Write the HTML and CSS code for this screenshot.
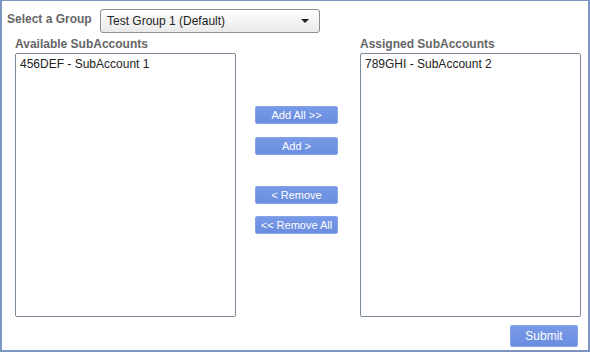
FILE: index.html
```html
<!DOCTYPE html>
<html>
<head>
<meta charset="utf-8">
<link rel="stylesheet" href="styles.css">
</head>
<body>
<div class="frame">
  <div class="top">
    <span class="label">Select a Group</span>
    <div class="select"><span>Test Group 1 (Default)</span><span class="arrow"></span></div>
  </div>
  <div class="cols">
    <div class="col">
      <div class="heading">Available SubAccounts</div>
      <div class="list"><div class="item">456DEF - SubAccount 1</div></div>
    </div>
    <div class="mid">
      <button class="btn">Add All &gt;&gt;</button>
      <button class="btn">Add &gt;</button>
      <button class="btn gap">&lt; Remove</button>
      <button class="btn">&lt;&lt; Remove All</button>
    </div>
    <div class="col">
      <div class="heading">Assigned SubAccounts</div>
      <div class="list"><div class="item">789GHI - SubAccount 2</div></div>
    </div>
  </div>
  <div class="foot"><button class="btn submit">Submit</button></div>
</div>
</body>
</html>
```
FILE: styles.css
```css
* { box-sizing: border-box; }
body { margin: 0; font-family: "Liberation Sans", Arial, sans-serif; font-size: 12px; color: #333; }
.frame {
  width: 590px; height: 352px;
  border: 2px solid #7b97c1; border-top-width: 1px;
  background: #fff;
  padding: 8px 0 0 0;
}
.top { display: flex; align-items: center; padding-left: 5px; height: 24px; }
.label { font-weight: bold; color: #666; width: 93px; margin-top: -4px; }
.select {
  width: 220px; height: 24px;
  border: 1px solid #8a8f96; border-radius: 3px;
  background: linear-gradient(#ffffff, #e9e9e9);
  display: flex; align-items: center; justify-content: space-between;
  padding: 0 10px 0 6px; color: #222;
}
.arrow { width: 0; height: 0; border-left: 4px solid transparent; border-right: 4px solid transparent; border-top: 4px solid #222; }
.cols { display: flex; padding-left: 13px; margin-top: 4px; }
.col { width: 221px; }
.heading { font-weight: bold; color: #666; height: 16px; line-height: 14px; }
.list {
  height: 264px; border: 1px solid #7c8b99; border-radius: 2px;
  padding: 3px 4px;
}
.item { color: #222; line-height: 15px; }
.mid { width: 124px; display: flex; flex-direction: column; align-items: flex-start; padding-left: 19px; padding-top: 69px; }
.btn {
  width: 83px; height: 18px;
  font-family: "Liberation Sans", Arial, sans-serif; font-size: 11px; color: #fff;
  background: linear-gradient(#7799e6, #6a8de0);
  border: 1px solid #86a3e6; border-radius: 2px; padding: 0;
  margin: 0 0 13px 0;
}
.mid .btn.gap { margin-top: 18px; margin-bottom: 12px; }
.foot { display: flex; justify-content: flex-end; padding-right: 10px; margin-top: 8px; }
.submit { width: 68px; height: 22px; font-size: 12px; margin: 0; }
```
